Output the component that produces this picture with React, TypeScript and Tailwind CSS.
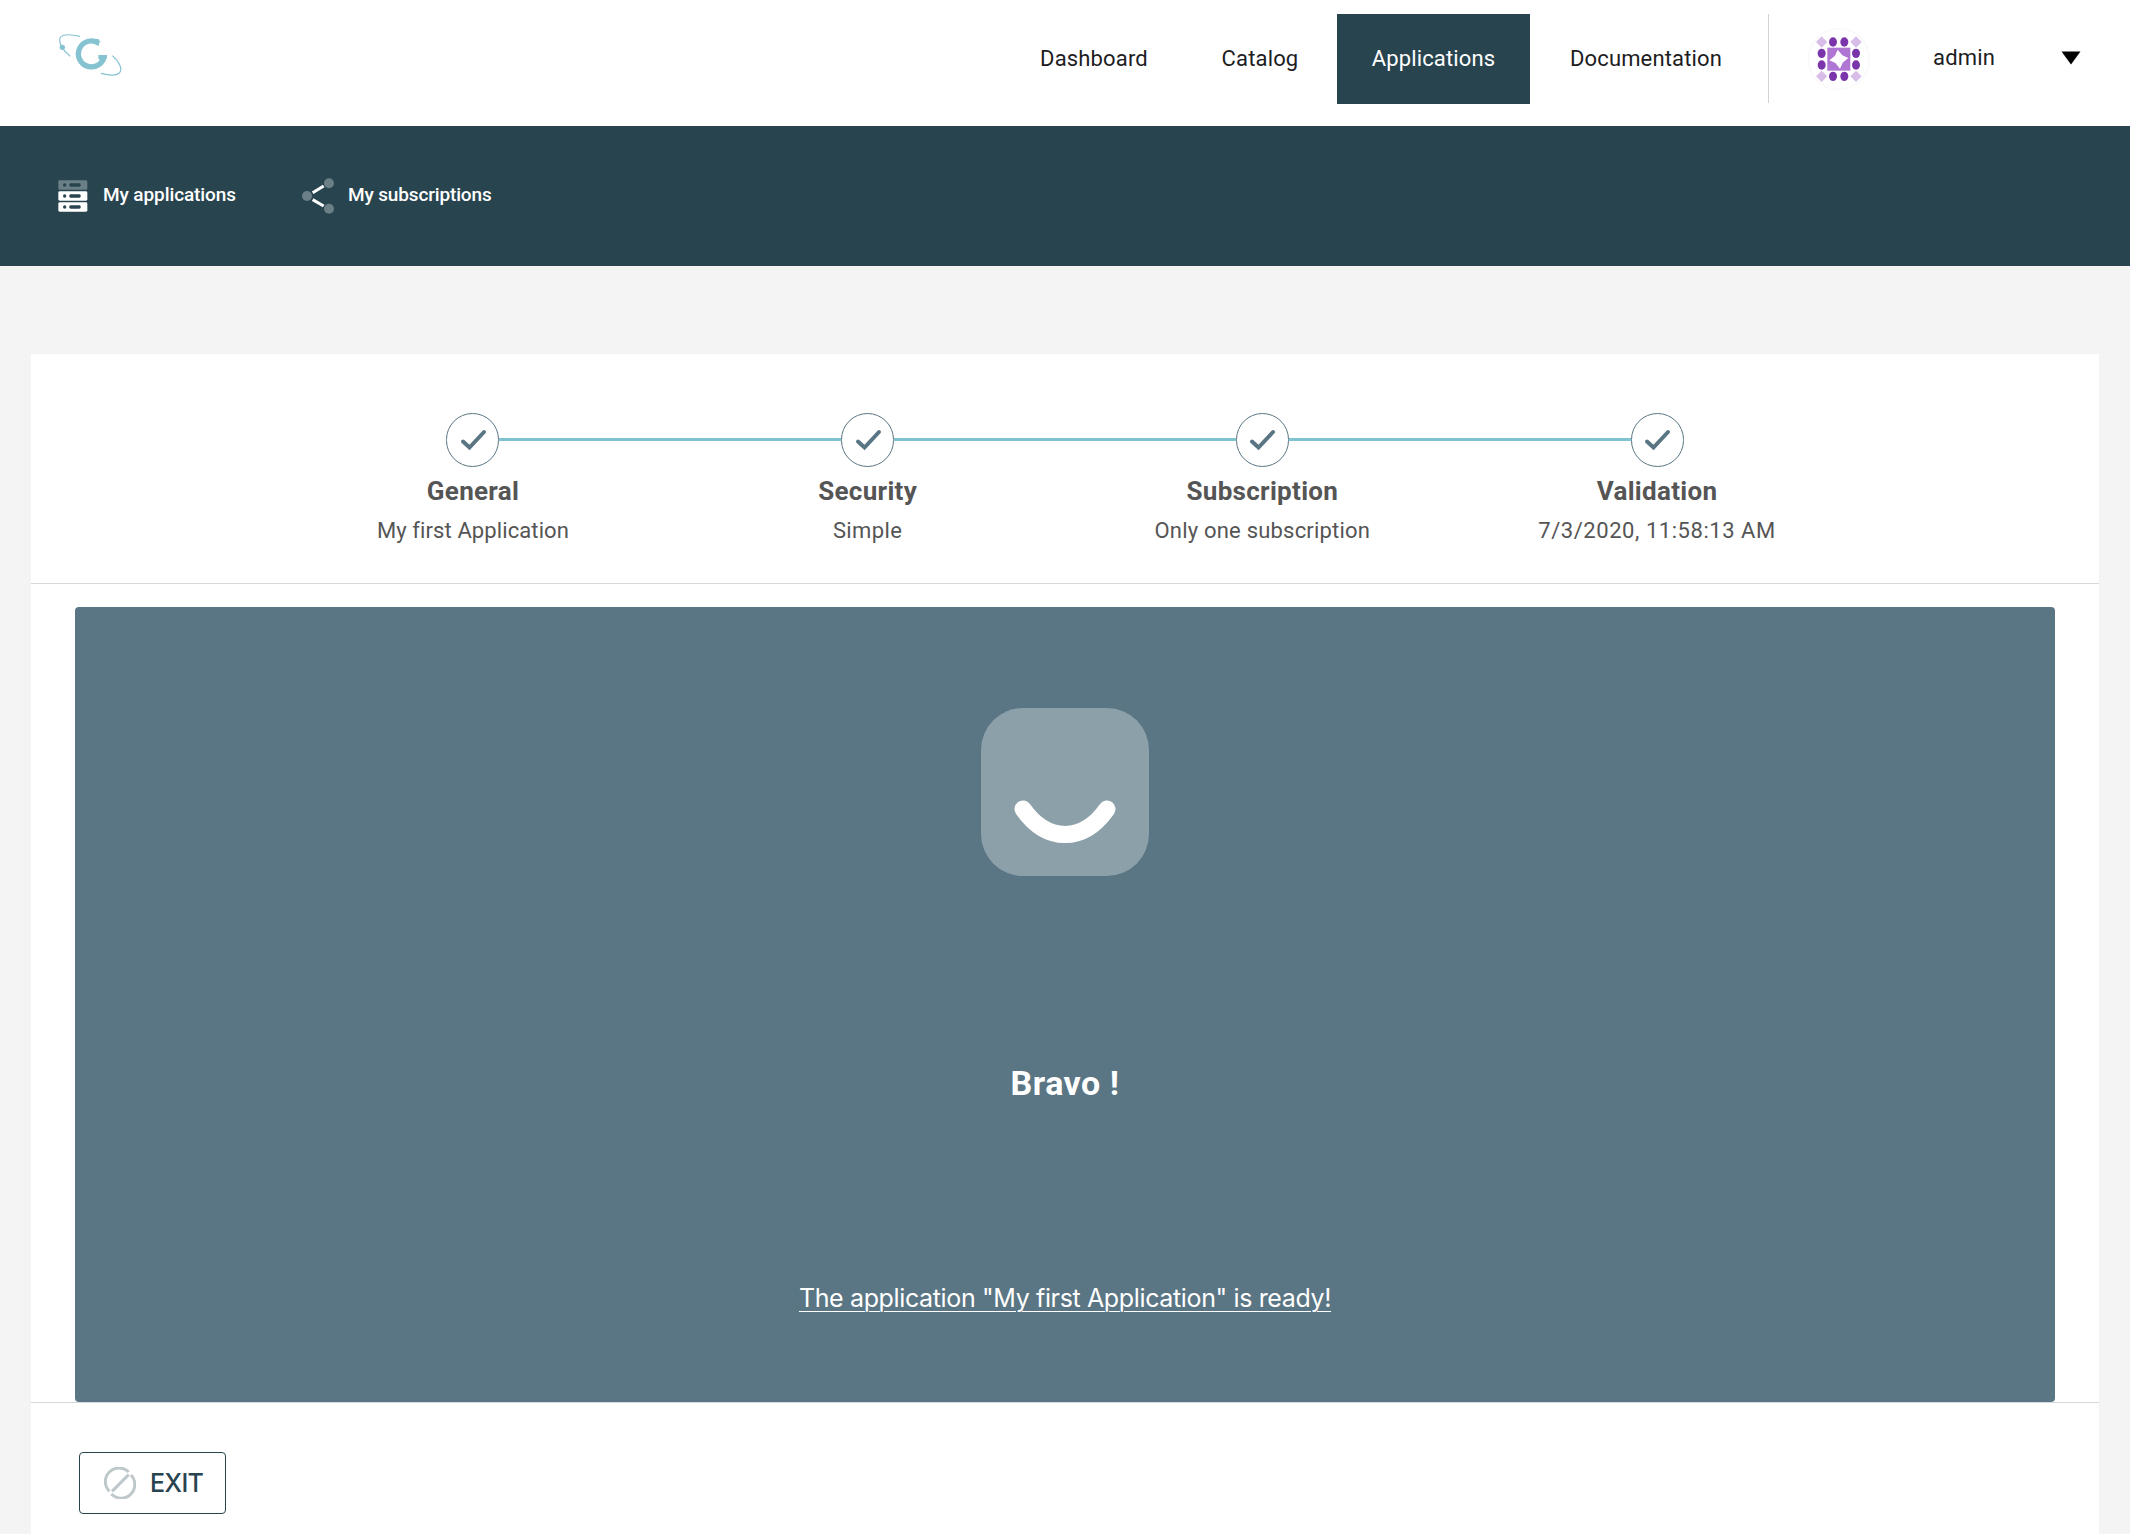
import React from "react";
import clsx from "clsx";

function Logo() {
  return (
    <svg className="h-[70px] w-[100px] shrink-0" viewBox="0 0 300 210" fill="none" stroke="#86c3d1">
      <path d="M177 70A39 39 0 1 0 193 106" strokeWidth="16" />
      <path d="M175 105h26v9l-18 8-8-6z" fill="#86c3d1" stroke="none" />
      <path d="M163 56l14 2v20l-14-7z" fill="#86c3d1" stroke="none" />
      <path d="M120 49C86 41 60 43 59 58C58 76 72 94 91 109" strokeWidth="3.500" />
      <path d="M217 107C240 127 248 149 238 159C229 167 205 166 183 160" strokeWidth="3.500" />
      <circle cx="67" cy="82" r="8" fill="#86c3d1" stroke="none" />
    </svg>
  );
}

const dots = [
  [98, 64], [132, 64], [64, 98], [167, 98], [64, 133], [167, 133], [98, 167], [132, 167],
];
const diamonds = [[64, 64], [167, 64], [64, 167], [167, 167]];

function Avatar() {
  return (
    <svg className="h-[64px] w-[64px] shrink-0" viewBox="20 19 192 192">
      <circle cx="115.5" cy="115.5" r="91" fill="none" stroke="#fafafa" strokeWidth="6" />
      {diamonds.map(([x, y]) => (
        <path key={`${x}-${y}`} d={`M${x} ${y - 17}l17 17-17 17-17-17z`} fill="#d8bde8" />
      ))}
      {dots.map(([x, y]) => (
        <ellipse key={`${x}-${y}`} cx={x} cy={y} rx="12" ry="14" fill="#7b35ab" />
      ))}
      <path d="M81 81h69v69H81z" fill="#b076d3" />
      <path d="M112 87L126 104L144 112L127 126L119 144L105 127L87 119L104 105z" fill="#fff" />
    </svg>
  );
}

function ServerIcon() {
  return (
    <svg className="h-[32px] w-[30px] shrink-0" viewBox="0 0 90 96">
      {[0, 33, 66].map((y, i) => (
        <g key={y}>
          <rect x="1" y={y + 1} width="87" height="28" rx="4" fill={i ? "#fff" : "#6b7f87"} />
          <circle cx="20" cy={y + 15} r="5" fill="#28444f" />
          <rect x="34" y={y + 10} width="34" height="10" rx="4" fill="#28444f" />
        </g>
      ))}
    </svg>
  );
}

function ShareIcon() {
  return (
    <svg className="h-[36px] w-[32px] shrink-0" viewBox="0 0 96 108">
      <path d="M32 44L65 24M32 65L65 84" stroke="#fff" strokeWidth="9" />
      <circle cx="15" cy="54" r="15" fill="#6b7f87" />
      <circle cx="81" cy="16" r="15" fill="#6b7f87" />
      <circle cx="81" cy="92" r="15" fill="#6b7f87" />
    </svg>
  );
}

function CheckIcon() {
  return (
    <svg className="h-[52px] w-[52px] shrink-0" viewBox="0 0 52 52" fill="none" stroke="#5a7583">
      <path d="M16 27.500L22.500 33.500L37 18" strokeWidth="4" strokeLinecap="round" />
    </svg>
  );
}

function Smile() {
  return (
    <svg className="h-[168px] w-[168px]" viewBox="0 0 168 168" fill="none">
      <rect width="168" height="168" rx="42" fill="#8ca0a9" />
      <path d="M42 101C66 135 102 135 126 101" stroke="#fff" strokeWidth="17" strokeLinecap="round" />
    </svg>
  );
}

function ForbiddenIcon() {
  return (
    <svg className="h-[32px] w-[32px] shrink-0" viewBox="0 0 96 96" fill="none" stroke="#bec8cb" strokeWidth="9">
      <path d="M74 15A41 41 0 0 0 16 73" />
      <path d="M81 24A41 41 0 0 1 22 81" />
      <path d="M24 73L74 23" />
    </svg>
  );
}

const nav = [
  { label: "Dashboard", box: "w-[178px] text-[#1d1d1f]" },
  { label: "Catalog", box: "w-[144px] text-[#1d1d1f]" },
  { label: "Applications", box: "w-[193px] bg-[#28444f] text-white" },
  { label: "Documentation", box: "w-[222px] text-[#1d1d1f]" },
];

const steps = [
  { title: "General", detail: "My first Application", tracking: "tracking-[0.1px]" },
  { title: "Security", detail: "Simple", tracking: "tracking-[0.4px]" },
  { title: "Subscription", detail: "Only one subscription", tracking: "tracking-[0.2px]" },
  { title: "Validation", detail: "7/3/2020, 11:58:13 AM", tracking: "tracking-[0.55px]" },
];

export default function App() {
  return (
    <div className="h-[1534px] w-[2130px] overflow-hidden bg-[#f4f4f4] font-['Roboto',sans-serif]">
      <header className="flex h-[126px] items-start bg-white pl-10">
        <div className="pt-5">
          <Logo />
        </div>
        <nav className="mt-[14px] ml-auto flex gap-[5px] text-[22px] tracking-[0.15px]">
          {nav.map((n) => (
            <a key={n.label} className={clsx("flex h-[90px] items-center justify-center pb-[2px]", n.box)}>
              {n.label}
            </a>
          ))}
        </nav>
        <div className="mt-[14px] ml-[11px] flex h-[89px] w-[362px] items-center border-l border-[#d3d3d3] pl-[38px]">
          <Avatar />
          <span className="mb-[3px] ml-[62px] w-[128px] text-[22px] tracking-[0.2px] text-[#1d1d1f]">admin</span>
          <svg className="mb-[1px] h-[14px] w-[20px]" viewBox="0 0 20 14">
            <path d="M0.500 0.500h19L10 13.500z" fill="#000" />
          </svg>
        </div>
      </header>

      <div className="flex h-[140px] bg-[#28444f] pl-[58px] text-[19px] font-medium text-white">
        <a className="flex h-[140px] w-[244px] items-center">
          <ServerIcon />
          <span className="mb-[1px] ml-[15px] tracking-[-0.1px]">My applications</span>
        </a>
        <a className="flex h-[140px] items-center">
          <ShareIcon />
          <span className="mb-[1px] ml-[14px] tracking-[-0.15px]">My subscriptions</span>
        </a>
      </div>

      <main className="mx-[31px] mt-[88px] h-[1180px] bg-white">
        <section className="flex h-[230px] justify-center border-b border-[#d6d9da] pt-[59px]">
          {steps.map((s, i) => (
            <div key={s.title} className="flex w-[394.700px] flex-col items-center text-[#555555]">
              <div className="flex w-full items-center">
                <div className={clsx("mb-[1px] h-[3px] flex-1", i > 0 && "bg-[#7fc3cf]")} />
                <div className="flex h-[54px] w-[53px] items-center justify-center rounded-full border border-[#5a7583]">
                  <CheckIcon />
                </div>
                <div className={clsx("mb-[1px] h-[3px] flex-1", i < 3 && "bg-[#7fc3cf]")} />
              </div>
              <h3 className="mt-[8px] text-[26px] leading-[32px] font-bold tracking-[0.3px]">{s.title}</h3>
              <p className={clsx("mt-[10px] text-[22px] leading-[28px]", s.tracking)}>{s.detail}</p>
            </div>
          ))}
        </section>

        <section className="border-b border-[#d6d9da] px-[44px] pt-[23px]">
          <div className="flex h-[795px] flex-col items-center rounded-[4px] bg-[#5a7583] pt-[101px] text-white">
            <Smile />
            <h2 className="mt-[187px] text-[34px] leading-[40px] font-bold tracking-[0.5px]">Bravo !</h2>
            <a className="mt-[179px] font-['Inter',sans-serif] text-[25px] leading-[32px] tracking-[-0.36px] underline decoration-1 underline-offset-[4px]">
              The application "My first Application" is ready!
            </a>
          </div>
        </section>

        <button className="mt-[49px] ml-[48px] flex h-[62px] w-[147px] items-center rounded-[4px] border border-[#28444f] pl-[24px] text-[#28444f]">
          <ForbiddenIcon />
          <span className="mt-[2px] ml-[14px] font-['Inter',sans-serif] text-[25px] font-medium tracking-[-0.6px]">EXIT</span>
        </button>
      </main>
    </div>
  );
}
